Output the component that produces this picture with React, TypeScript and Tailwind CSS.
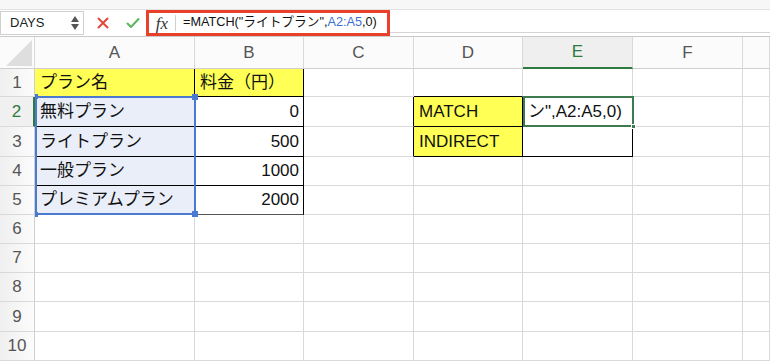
import React from "react";

const W = [35, 160, 109, 110, 109, 110, 110, 27];
const H = [28, 30, 30, 29, 29, 29, 29, 29, 30, 29];
const GRID = "border-[#d9d9d9]";

type CellProps = {
  w: number;
  h: number;
  children?: React.ReactNode;
  cls?: string;
};

function Cell({ w, h, children, cls = "" }: CellProps) {
  return (
    <div
      className={`shrink-0 flex items-center overflow-hidden whitespace-nowrap border-r border-b ${cls}`}
      style={{ width: w, height: h }}
    >
      {children}
    </div>
  );
}

export default function App() {
  const font = { fontFamily: '"Liberation Sans", "Noto Sans CJK JP", sans-serif' };
  const rowsData: Record<number, Record<number, { text?: string; cls: string; right?: boolean }>> = {
    1: {
      1: { text: "プラン名", cls: "bg-[#ffff55] border-r-black border-b-black" },
      2: { text: "料金（円）", cls: "bg-[#ffff55] border-r-black border-b-black" },
      4: { cls: "border-r-[#d9d9d9] border-b-black" },
      5: { cls: "border-r-[#d9d9d9] border-b-black" },
    },
    2: {
      1: { text: "無料プラン", cls: "bg-[#e9eef8] border-r-black border-b-black" },
      2: { text: "0", right: true, cls: "border-r-black border-b-black" },
      3: { cls: "border-r-black border-b-[#d9d9d9]" },
      4: { text: "MATCH", cls: "bg-[#ffff55] border-r-black border-b-black" },
      5: { text: "ン\",A2:A5,0)", cls: "border-r-black border-b-black" },
    },
    3: {
      1: { text: "ライトプラン", cls: "bg-[#e9eef8] border-r-black border-b-black" },
      2: { text: "500", right: true, cls: "border-r-black border-b-black" },
      3: { cls: "border-r-black border-b-[#d9d9d9]" },
      4: { text: "INDIRECT", cls: "bg-[#ffff55] border-r-black border-b-black" },
      5: { cls: "border-r-black border-b-black" },
    },
    4: {
      1: { text: "一般プラン", cls: "bg-[#e9eef8] border-r-black border-b-black" },
      2: { text: "1000", right: true, cls: "border-r-black border-b-black" },
    },
    5: {
      1: { text: "プレミアムプラン", cls: "bg-[#e9eef8] border-r-black border-b-black" },
      2: { text: "2000", right: true, cls: "border-r-black border-b-[#555]" },
    },
  };

  const cols = ["", "A", "B", "C", "D", "E", "F", ""];

  return (
    <div className="w-[770px] h-[363px] overflow-hidden bg-white relative" style={font}>
      {/* top strip */}
      <div className="h-[10px] bg-[#f7f7f7] border-b border-[#e2e2e2]" />
      {/* formula bar */}
      <div className="h-[27px] flex items-stretch bg-white border-b border-[#c9c9c9]">
        <div className="w-[84px] shrink-0 border border-[#cfcfcf] flex items-center justify-between pl-[9px] pr-[4px] mt-[1px] mb-[1px] bg-white">
          <span className="text-[13px] text-[#222]">DAYS</span>
          <div className="flex flex-col items-center gap-[2px]">
            <svg width="8" height="6" viewBox="0 0 8 6"><path d="M4 0 L8 6 L0 6 Z" fill="#555" /></svg>
            <svg width="8" height="6" viewBox="0 0 8 6"><path d="M0 0 L8 0 L4 6 Z" fill="#555" /></svg>
          </div>
        </div>
        <div className="w-[62px] shrink-0 flex items-center pl-[13px] gap-[17px]">
          <svg width="12" height="12" viewBox="0 0 12 12">
            <path d="M1.5 1.5 L10.5 10.5 M10.5 1.5 L1.5 10.5" stroke="#e4483b" strokeWidth="2" strokeLinecap="round" />
          </svg>
          <svg width="14" height="12" viewBox="0 0 14 12">
            <path d="M1.5 6.5 L5 10 L12.5 2" stroke="#5cb85c" strokeWidth="2" fill="none" strokeLinecap="round" strokeLinejoin="round" />
          </svg>
        </div>
        <div className="w-[244px] shrink-0 border-[3px] border-[#e8402a] flex items-center bg-white">
          <span className="w-[26px] text-center italic text-[17px] text-[#333] leading-none" style={{ fontFamily: '"Liberation Serif", serif' }}>
            fx
          </span>
          <div className="w-px h-[16px] bg-[#d0d0d0] mr-[7px]" />
          <span className="text-[12.7px] text-[#111] whitespace-nowrap">
            =MATCH("ライトプラン",<span className="text-[#3b6fd4]">A2:A5</span>,0)
          </span>
        </div>
        <div className="flex-1 border-b border-[#d4d4d4] mb-[3px]" />
      </div>
      {/* grid */}
      <div className="relative">
        {/* column header */}
        <div className="flex h-[32px]">
          {cols.map((c, i) => {
            const active = i === 5;
            const corner = i === 0;
            return (
              <div
                key={i}
                className={`shrink-0 flex items-center justify-center text-[17px] border-r border-[#d9d9d9] ${
                  active
                    ? "bg-[#efefef] text-[#2f7a3f] border-b-2 border-b-[#2f7a3f]"
                    : "bg-[#fbfbfb] text-[#555] border-b border-b-[#cfcfcf]"
                }`}
                style={{ width: W[i], height: 32 }}
              >
                {corner ? (
                  <svg width="26" height="26" viewBox="0 0 26 26" className="self-end mb-[2px] ml-[4px]">
                    <path d="M26 0 L26 26 L0 26 Z" fill="#dedede" />
                  </svg>
                ) : (
                  c
                )}
              </div>
            );
          })}
        </div>
        {H.map((h, ri) => {
          const r = ri + 1;
          const rd = rowsData[r] || {};
          return (
            <div key={r} className="flex">
              <div
                className={`shrink-0 flex items-center justify-center text-[17px] border-b border-[#d9d9d9] ${
                  r === 2
                    ? "bg-[#f0f0f0] text-[#2f7a3f] border-r-2 border-r-[#2f7a3f]"
                    : "bg-gradient-to-r from-[#efefef] to-[#fcfcfc] text-[#555] border-r border-r-[#cfcfcf]"
                }`}
                style={{ width: W[0], height: h }}
              >
                {r}
              </div>
              {W.slice(1).map((w, ci0) => {
                const ci = ci0 + 1;
                const d = rd[ci];
                return (
                  <Cell key={ci} w={w} h={h} cls={d ? d.cls : GRID}>
                    {d && d.text !== undefined && (
                      <span
                        className={`text-[17px] text-[#111] ${d.right ? "ml-auto pr-[4px]" : "pl-[5px]"}`}
                      >
                        {d.text}
                      </span>
                    )}
                  </Cell>
                );
              })}
            </div>
          );
        })}
        {/* selection A2:A5 */}
        <div className="absolute left-[35px] top-[59px] w-[161px] h-[119px] border-2 border-[#4a79cf] pointer-events-none" />
        <div className="absolute left-[192px] top-[57px] w-[6px] h-[6px] bg-[#4a79cf]" />
        <div className="absolute left-[192px] top-[174px] w-[6px] h-[6px] bg-[#4a79cf]" />
        <div className="absolute left-[35px] top-[57px] w-[3px] h-[5px] bg-[#4a79cf]" />
        <div className="absolute left-[35px] top-[175px] w-[3px] h-[5px] bg-[#4a79cf]" />
        {/* active cell E2 */}
        <div className="absolute left-[523px] top-[59px] w-[111px] h-[31px] border-2 border-[#3d7a4d] pointer-events-none" />
        <div className="absolute left-[631px] top-[87px] w-[5px] h-[5px] bg-[#3d7a4d] border border-white" />
      </div>
    </div>
  );
}
